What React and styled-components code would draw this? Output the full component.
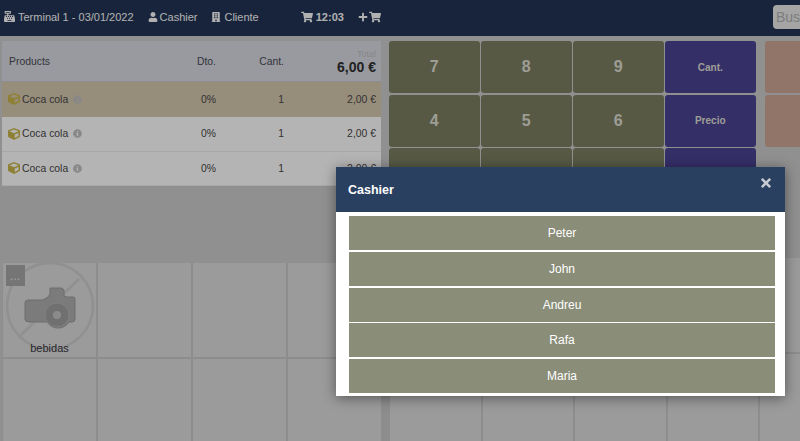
import React from "react";
import styled, { createGlobalStyle } from "styled-components";
import { FaCashRegister, FaUser, FaBuilding, FaShoppingCart, FaPlus, FaCube, FaInfoCircle, FaTimes } from "react-icons/fa";

const Global = createGlobalStyle`
  html, body { margin: 0; padding: 0; height: 100%; overflow: hidden; }
  body { font-family: "Liberation Sans", Arial, sans-serif; background: #c0c0c0; }
  * { box-sizing: border-box; }
`;

const Page = styled.div`
  position: relative;
  width: 800px;
  height: 441px;
  overflow: hidden;
  background: #c0c0c0;
`;

const TopBar = styled.header`
  height: 36px;
  display: flex;
  align-items: center;
  padding: 0 0 3px 4px;
  background: #1f304f;
  color: #ececec;
  font-size: 11px;
  white-space: nowrap;
`;

const TopItem = styled.span`
  display: flex;
  align-items: center;
  gap: ${(p) => p.$gap ?? 3}px;
  margin-right: ${(p) => p.$after ?? 0}px;
  font-weight: ${(p) => (p.$bold ? 700 : 400)};
  svg { flex: none; }
`;

const Search = styled.input`
  flex: none;
  width: 100px;
  height: 24px;
  padding: 0 3px;
  border: 0;
  border-radius: 4px;
  background: #dcdcdc;
  font: 14px "Liberation Sans", Arial, sans-serif;
  &::placeholder { color: #a8a8a8; opacity: 1; }
`;

const Main = styled.main`
  display: grid;
  grid-template-columns: 389px 411px;
  height: 405px;
`;

const LeftPane = styled.section`
  display: flex;
  flex-direction: column;
  padding: 5px 0 0 2px;
`;

const RightPane = styled.section`
  display: flex;
  flex-direction: column;
  padding-top: 5px;
`;

const Ticket = styled.div`
  width: 379px;
  height: 145px;
  margin-bottom: 77px;
  background: #f0f0f0;
`;

const rowColumns = `
  display: grid;
  grid-template-columns: 1fr 60px 68px 92px;
  align-items: center;
  padding-right: 5px;
`;

const TicketHead = styled.div`
  ${rowColumns}
  height: 41px;
  padding-left: 7px;
  background: #cdced6;
  color: #44474f;
  font-size: 10.4px;
  border-bottom: 1px solid #bdbdc2;
`;

const Right = styled.div`
  text-align: right;
`;

const TotalBox = styled.div`
  text-align: right;
  line-height: 1;
`;

const TotalLabel = styled.div`
  font-size: 9px;
  color: #b4b4b4;
  margin-top: 2px;
`;

const TotalValue = styled.div`
  font-size: 14px;
  font-weight: 700;
  color: #2c2c2c;
  margin-top: 1px;
`;

const TicketRow = styled.div`
  ${rowColumns}
  height: ${(p) => p.$h}px;
  padding: 0 5px 1px 6px;
  background: ${(p) => (p.$active ? "#c9bca5" : "#f0f0f0")};
  border-bottom: ${(p) => (p.$active ? "0" : "1px solid #e0e0e0")};
  color: #444;
  font-size: 10.4px;
`;

const ProductName = styled.div`
  display: flex;
  align-items: center;
  gap: 2px;
`;

const CubeIcon = styled(FaCube)`
  color: #bfad44;
  font-size: 12px;
`;

const InfoIcon = styled(FaInfoCircle)`
  color: #b6b6b6;
  font-size: 9px;
  margin-left: 3px;
`;

const CellGrid = styled.div`
  display: grid;
  grid-template-columns: repeat(${(p) => p.$cols}, ${(p) => p.$w}px);
  grid-auto-rows: 94px;
  gap: 2px;
  padding-left: 1px;
  background: #bdbdbd;
  flex: 1;
  overflow: hidden;
`;

const Cell = styled.div`
  position: relative;
  background: #cfcfcf;
  display: flex;
  flex-direction: column;
  align-items: center;
`;

const MoreBadge = styled.div`
  position: absolute;
  left: 3px;
  top: 2px;
  width: 19px;
  height: 21px;
  background: #9c9c9c;
  color: #d4d4d4;
  font-size: 9px;
  font-weight: 700;
  line-height: 25px;
  text-align: center;
  letter-spacing: 1px;
`;

const CategoryLabel = styled.span`
  position: absolute;
  left: 0;
  right: 0;
  top: 79px;
  text-align: center;
  font-size: 11px;
  color: #33333a;
`;

const KeyArea = styled.div`
  display: grid;
  grid-template-columns: 376px 40px;
  height: 217px;
`;

const KeyGrid = styled.div`
  display: grid;
  grid-template-columns: repeat(${(p) => p.$cols}, ${(p) => p.$w}px);
  grid-auto-rows: 52px;
  gap: 1.5px;
  align-content: start;
`;

const Key = styled.div`
  display: flex;
  align-items: center;
  justify-content: center;
  border-radius: 3px;
  background: ${(p) => p.$bg};
  color: #d2d2c8;
  font-weight: 700;
  font-size: ${(p) => p.$size ?? 16}px;
`;

const Overlay = styled.div`
  position: absolute;
  inset: 0;
  background: rgba(0, 0, 0, 0.25);
`;

const Modal = styled.div`
  position: absolute;
  left: 336px;
  top: 167px;
  width: 449px;
  height: 229px;
  background: #fff;
  box-shadow: 0 2px 12px rgba(0, 0, 0, 0.45);
`;

const ModalHead = styled.div`
  position: relative;
  height: 45px;
  display: flex;
  align-items: center;
  padding: 1px 0 0 12px;
  background: #2a4060;
  color: #fff;
  font-size: 12.5px;
  font-weight: 700;
`;

const CloseIcon = styled(FaTimes)`
  position: absolute;
  right: 12px;
  top: 9px;
  font-size: 14px;
  color: #c8ccd2;
`;

const ModalList = styled.div`
  display: flex;
  flex-direction: column;
  gap: 1.75px;
  padding: 4px 10px 0 13px;
`;

const PersonButton = styled.div`
  height: 34px;
  display: flex;
  align-items: center;
  justify-content: center;
  background: #8a8d78;
  color: #fff;
  font-size: 12px;
`;

const NoPhoto = () => (
  <svg width="94" height="94" viewBox="0 0 94 94" style={{ display: "block" }}>
    <circle cx="47" cy="43" r="43" fill="none" stroke="#c0c0c0" strokeWidth="2.5" />
    <line x1="76" y1="16" x2="18" y2="72" stroke="#c0c0c0" strokeWidth="2.5" />
    <path d="M22 40q0-3 3-3h15l5-3 2-3v-6h12l2 2v6l3 1h6q2 0 2 2v20q0 3-3 3H66a13 13 0 0 1-22 0H26q-4 0-4-3z" fill="#a4a4a4" stroke="#929292" />
    <circle cx="54" cy="52" r="12" fill="#969696" stroke="#acacac" />
    <circle cx="54" cy="52" r="4" fill="#bababa" />
  </svg>
);

const numbers = ["7", "8", "9", "Cant.", "4", "5", "6", "Precio", "1", "2", "3", "", "0", "", "", ""];
const products = [{ active: true, h: 35 }, { h: 35 }, { h: 34 }];
const people = ["Peter", "John", "Andreu", "Rafa", "Maria"];

export default function App() {
  return (
    <Page>
      <Global />
      <TopBar>
        <TopItem $after={14}><FaCashRegister size={11} />Terminal 1 - 03/01/2022</TopItem>
        <TopItem $after={14} $gap={2}><FaUser size={10} />Cashier</TopItem>
        <TopItem $after={42}><FaBuilding size={10} />Cliente</TopItem>
        <TopItem $bold $after={14}><FaShoppingCart size={12} />12:03</TopItem>
        <TopItem $after={392} $gap={1}><FaPlus size={10} /><FaShoppingCart size={12} /></TopItem>
        <Search placeholder="Buscar" />
      </TopBar>
      <Main>
        <LeftPane>
          <Ticket>
            <TicketHead>
              <span>Products</span>
              <Right>Dto.</Right>
              <Right>Cant.</Right>
              <TotalBox>
                <TotalLabel>Total</TotalLabel>
                <TotalValue>6,00 €</TotalValue>
              </TotalBox>
            </TicketHead>
            {products.map((p, i) => (
              <TicketRow key={i} $active={p.active} $h={p.h}>
                <ProductName>
                  <CubeIcon />Coca cola<InfoIcon />
                </ProductName>
                <Right>0%</Right>
                <Right>1</Right>
                <Right>2,00 €</Right>
              </TicketRow>
            ))}
          </Ticket>
          <CellGrid $cols={4} $w={93}>
            <Cell>
              <NoPhoto />
              <MoreBadge>...</MoreBadge>
              <CategoryLabel>bebidas</CategoryLabel>
            </Cell>
            {Array.from({ length: 7 }, (_, i) => <Cell key={i} />)}
          </CellGrid>
        </LeftPane>
        <RightPane>
          <KeyArea>
            <KeyGrid $cols={4} $w={90.5}>
              {numbers.map((n, i) => {
                const side = i % 4 === 3;
                return (
                  <Key key={i} $bg={side ? "#473f8b" : "#75775c"} $size={side ? 10 : 16}>{n}</Key>
                );
              })}
            </KeyGrid>
            <KeyGrid $cols={1} $w={40}>
              <Key $bg="#c29d8d" />
              <Key $bg="#c29d8d" />
            </KeyGrid>
          </KeyArea>
          <CellGrid $cols={5} $w={90.5}>
            {Array.from({ length: 10 }, (_, i) => <Cell key={i} />)}
          </CellGrid>
        </RightPane>
      </Main>
      <Overlay />
      <Modal>
        <ModalHead>Cashier<CloseIcon /></ModalHead>
        <ModalList>
          {people.map((name) => <PersonButton key={name}>{name}</PersonButton>)}
        </ModalList>
      </Modal>
    </Page>
  );
}
